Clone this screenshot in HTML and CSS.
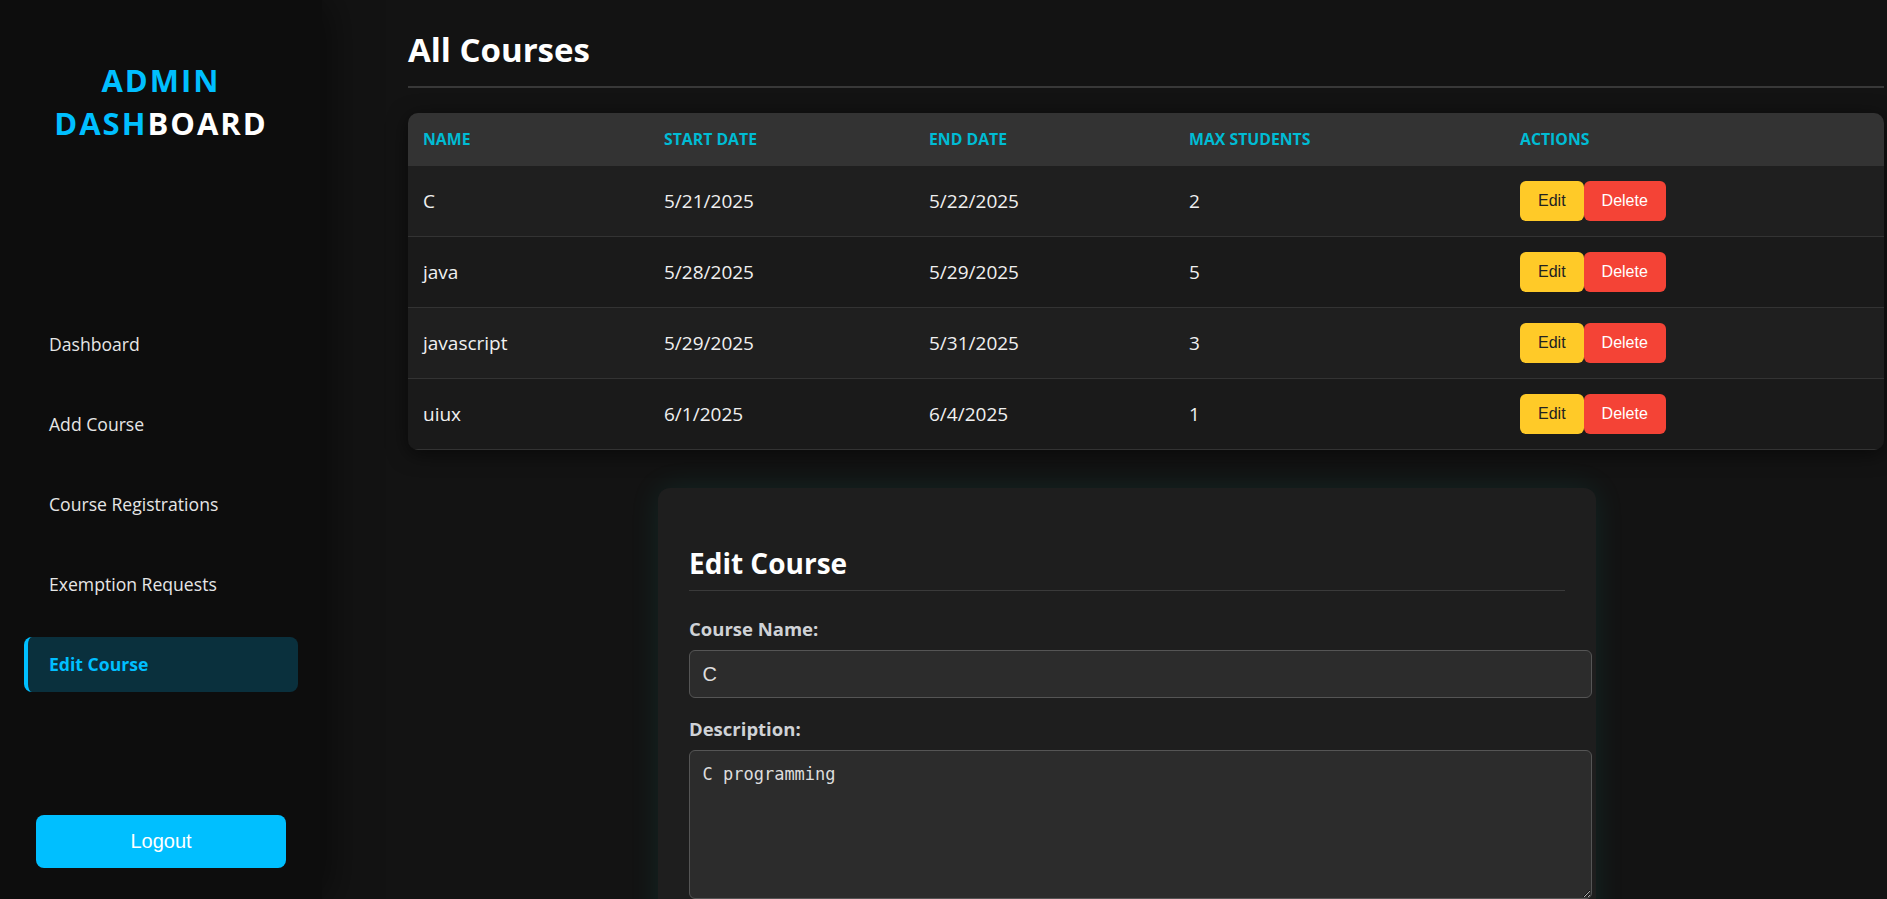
FILE: index.html
```html
<!DOCTYPE html>
<html lang="en">
<head>
<meta charset="utf-8">
<title>Admin Dashboard - Edit Course</title>
<link rel="stylesheet" href="styles.css">
</head>
<body>
<div class="layout">
  <aside class="sidebar">
    <div class="logo"><span class="accent">ADMIN</span><br><span class="accent">DASH</span>BOARD</div>
    <nav class="nav">
      <a class="nav-item" href="#">Dashboard</a>
      <a class="nav-item" href="#">Add Course</a>
      <a class="nav-item" href="#">Course Registrations</a>
      <a class="nav-item" href="#">Exemption Requests</a>
      <a class="nav-item active" href="#">Edit Course</a>
    </nav>
    <button class="logout" type="button">Logout</button>
  </aside>
  <main class="main">
    <h2 class="page-title">All Courses</h2>
    <div class="table-wrap">
      <table class="courses">
        <colgroup>
          <col class="c-name"><col class="c-start"><col class="c-end"><col class="c-max"><col>
        </colgroup>
        <thead>
          <tr><th>Name</th><th>Start Date</th><th>End Date</th><th>Max Students</th><th>Actions</th></tr>
        </thead>
        <tbody>
          <tr><td>C</td><td>5/21/2025</td><td>5/22/2025</td><td>2</td><td><div class="actions"><button class="btn btn-edit" type="button">Edit</button><button class="btn btn-delete" type="button">Delete</button></div></td></tr>
          <tr><td>java</td><td>5/28/2025</td><td>5/29/2025</td><td>5</td><td><div class="actions"><button class="btn btn-edit" type="button">Edit</button><button class="btn btn-delete" type="button">Delete</button></div></td></tr>
          <tr><td>javascript</td><td>5/29/2025</td><td>5/31/2025</td><td>3</td><td><div class="actions"><button class="btn btn-edit" type="button">Edit</button><button class="btn btn-delete" type="button">Delete</button></div></td></tr>
          <tr><td>uiux</td><td>6/1/2025</td><td>6/4/2025</td><td>1</td><td><div class="actions"><button class="btn btn-edit" type="button">Edit</button><button class="btn btn-delete" type="button">Delete</button></div></td></tr>
        </tbody>
      </table>
    </div>
    <div class="form-area">
      <div class="card">
        <h2 class="card-title">Edit Course</h2>
        <form class="form">
          <div class="form-group">
            <label class="label" for="name">Course Name:</label>
            <input class="field" id="name" type="text" value="C">
          </div>
          <div class="form-group">
            <label class="label" for="desc">Description:</label>
            <textarea class="field area" id="desc">C programming</textarea>
          </div>
        </form>
      </div>
    </div>
  </main>
</div>
</body>
</html>
```
FILE: styles.css
```css
html, body {
  margin: 0;
  padding: 0;
  height: 100%;
  overflow: hidden;
}
body {
  background: #131313;
  color: #eeeeee;
  font-family: "Open Sans", "Noto Sans", sans-serif;
}
.layout {
  display: flex;
  min-height: 100vh;
}
.sidebar {
  position: relative;
  z-index: 2;
  flex: 0 0 322px;
  width: 322px;
  height: 100vh;
  box-sizing: border-box;
  padding: 59px 24px 31px;
  background: #0d0d0d;
  box-shadow: 4px 0 40px rgba(0, 0, 0, 0.55);
  display: flex;
  flex-direction: column;
}
.logo {
  text-align: center;
  font-size: 31px;
  font-weight: 700;
  line-height: 43px;
  letter-spacing: 2px;
  color: #ffffff;
}
.accent {
  color: #00bfff;
}
.nav {
  margin-top: 172px;
  display: flex;
  flex-direction: column;
  gap: 25px;
}
.nav-item {
  display: block;
  padding: 15px 21px;
  border-left: 4px solid transparent;
  border-radius: 8px;
  color: #e6e6e6;
  font-size: 17.6px;
  line-height: 25px;
  text-decoration: none;
}
.nav-item.active {
  border-left-color: #00bfff;
  background: rgba(0, 191, 255, 0.2);
  color: #00bfff;
  font-weight: 700;
}
.logout {
  margin-top: auto;
  align-self: center;
  width: 250px;
  height: 53px;
  border: none;
  border-radius: 8px;
  background: #00bfff;
  color: #ffffff;
  font-family: "Liberation Sans", Arial, sans-serif;
  font-size: 20px;
  cursor: pointer;
}
.main {
  flex: 1;
  min-width: 0;
  padding: 27px 3px 0 86px;
}
.page-title {
  margin: 0 0 25px;
  padding-bottom: 14px;
  border-bottom: 2px solid #383838;
  font-size: 33px;
  line-height: 45px;
  font-weight: 700;
  color: #ffffff;
}
.table-wrap {
  border-radius: 10px;
  overflow: hidden;
  box-shadow: 0 4px 20px rgba(0, 0, 0, 0.55);
}
.courses {
  width: 100%;
  border-collapse: collapse;
  table-layout: fixed;
}
.c-name { width: 241px; }
.c-start { width: 265px; }
.c-end { width: 260px; }
.c-max { width: 331px; }
.courses th {
  background: #333333;
  color: #00bcd4;
  text-align: left;
  text-transform: uppercase;
  font-size: 15.8px;
  font-weight: 700;
  line-height: 21px;
  padding: 16px 15px;
}
.courses td {
  padding: 15px;
  border-bottom: 1px solid #333333;
  font-size: 19px;
  line-height: 26px;
  color: #f0f0f0;
  vertical-align: middle;
}
.courses tbody tr:nth-child(odd) {
  background: #1f1f1f;
}
.courses tbody tr:nth-child(even) {
  background: #1a1a1a;
}
.actions {
  display: flex;
}
.btn {
  height: 40px;
  padding: 0 18px;
  border: none;
  border-radius: 6px;
  font-family: "Liberation Sans", Arial, sans-serif;
  font-size: 16px;
  cursor: pointer;
}
.btn-edit {
  background: #ffca28;
  color: #222222;
}
.btn-delete {
  background: #f44336;
  color: #ffffff;
}
.form-area {
  margin-top: 38px;
  padding-right: 38px;
}
.card {
  width: 938px;
  box-sizing: border-box;
  margin: 0 auto;
  padding: 31px;
  background: #1e1e1e;
  border-radius: 12px;
  box-shadow: 0 0 30px rgba(0, 190, 170, 0.11);
}
.card-title {
  margin: 25px 0;
  padding-bottom: 8px;
  border-bottom: 1px solid #3a3a3a;
  font-size: 28px;
  line-height: 38px;
  font-weight: 700;
  color: #ffffff;
}
.form-group {
  margin-bottom: 18px;
}
.label {
  display: block;
  margin-bottom: 9px;
  font-size: 18.5px;
  line-height: 25px;
  font-weight: 700;
  color: #cfd2d6;
}
.field {
  display: block;
  width: 100%;
  box-sizing: content-box;
  padding: 12.5px;
  border: 1px solid #555555;
  border-radius: 6px;
  background: #2c2c2c;
  color: #dddddd;
  font-family: "Liberation Sans", Arial, sans-serif;
  font-size: 20px;
  line-height: 21px;
  height: 21px;
}
.area {
  height: 122px;
  font-family: "DejaVu Sans Mono", "Liberation Mono", monospace;
  font-size: 17px;
  line-height: 21px;
  resize: vertical;
}
```
